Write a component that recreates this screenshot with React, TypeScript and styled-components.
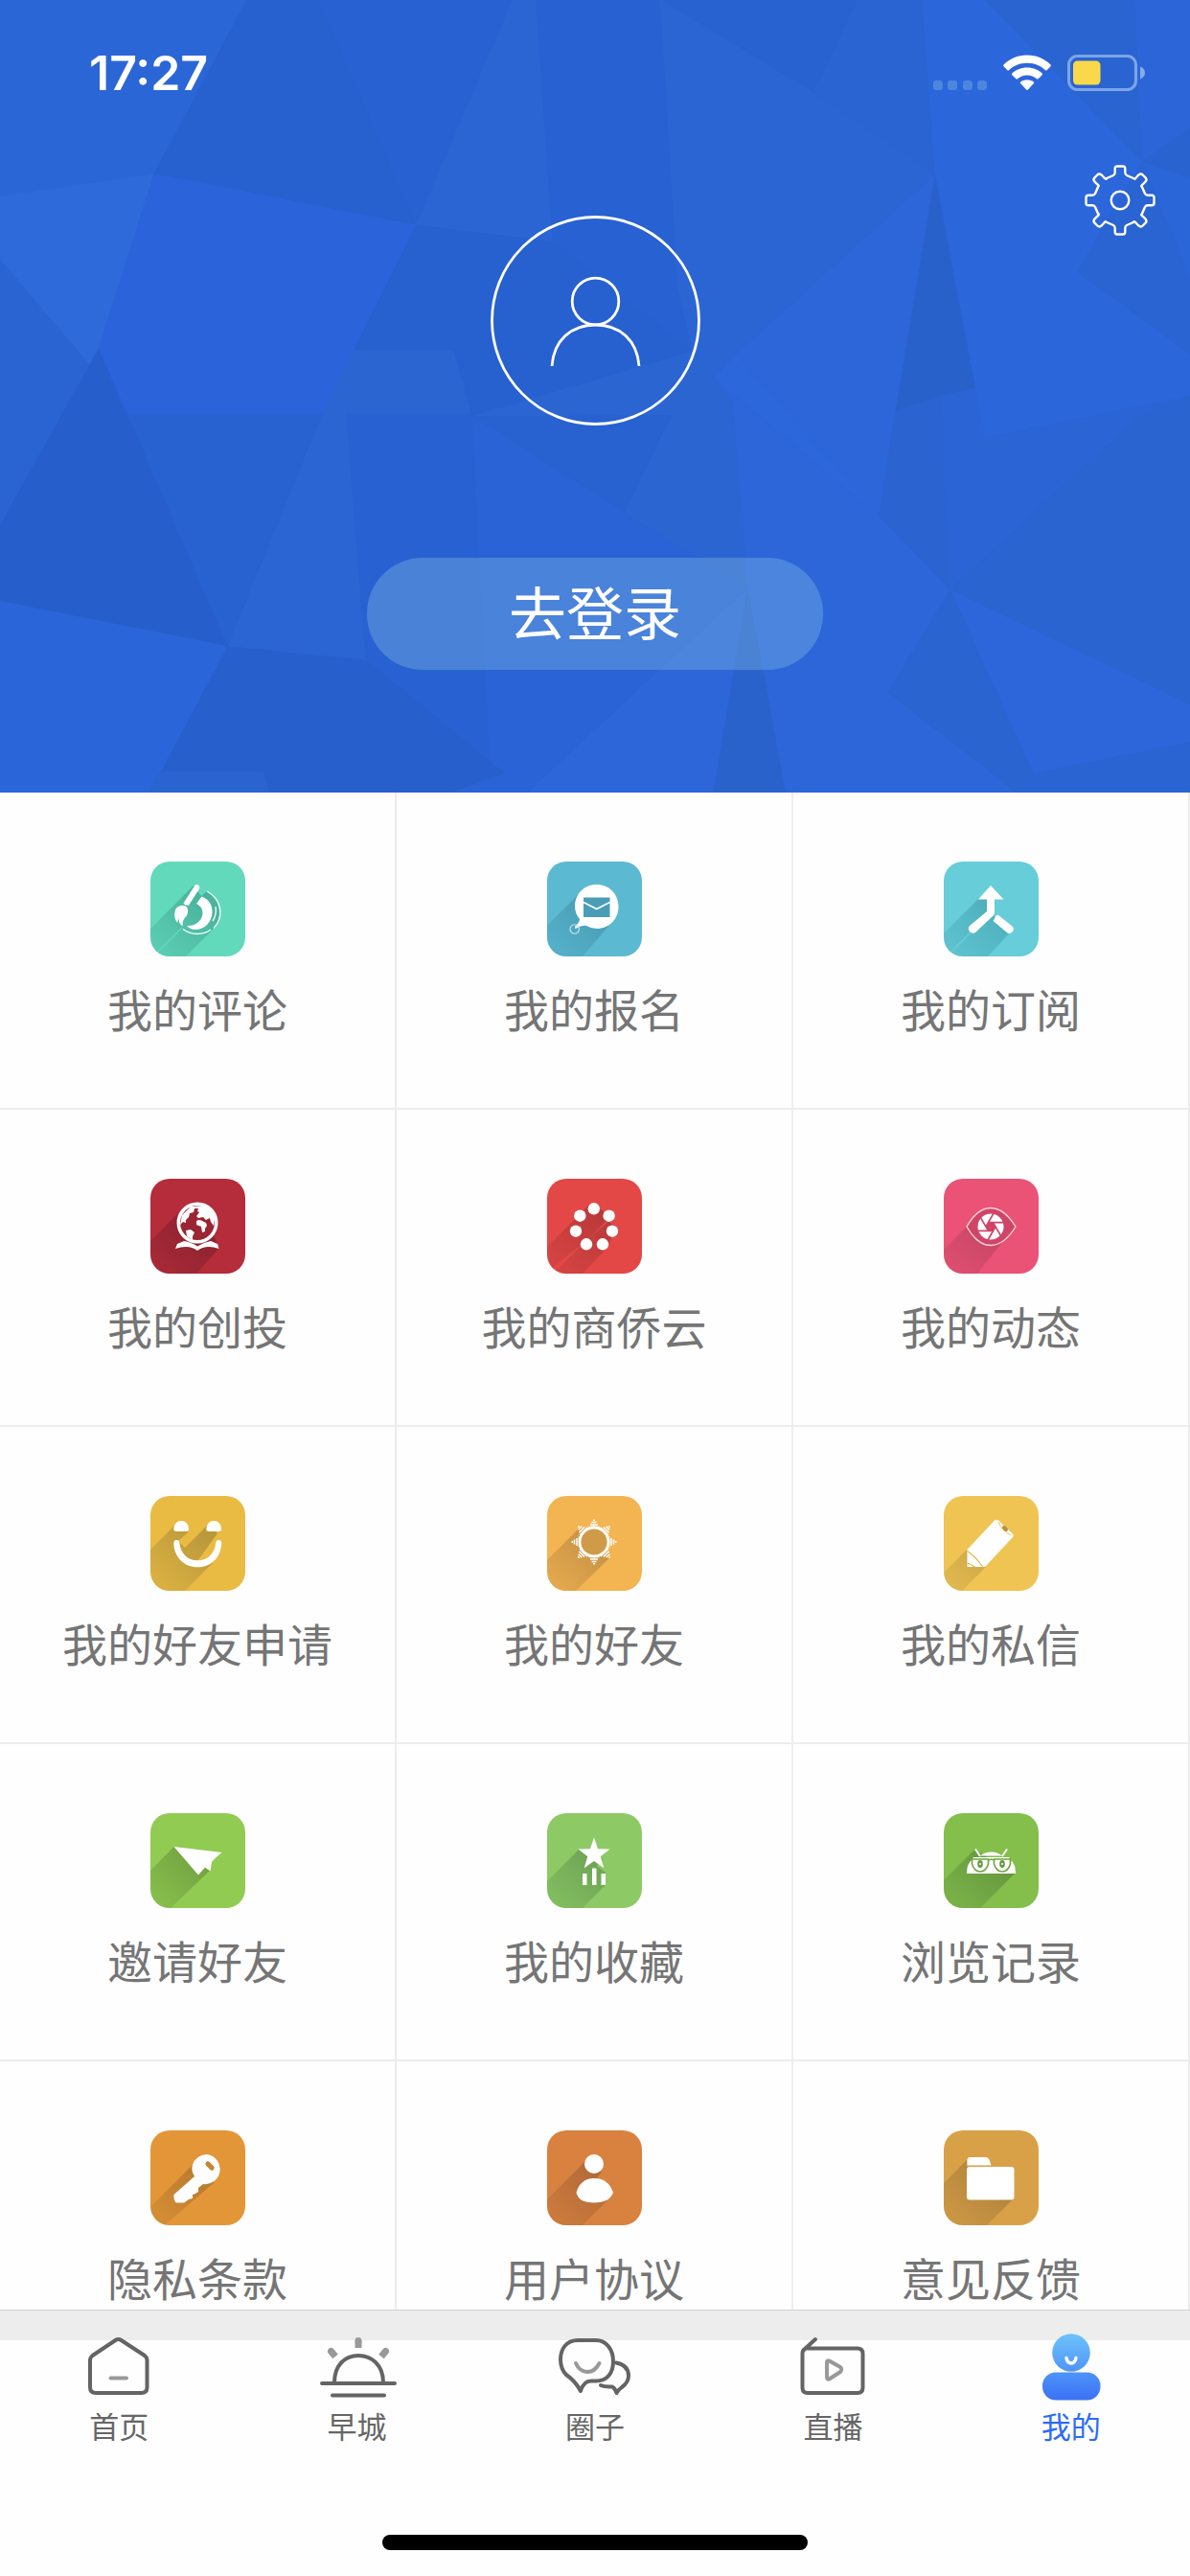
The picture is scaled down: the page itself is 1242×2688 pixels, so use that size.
import React from 'react';
import styled, { createGlobalStyle } from 'styled-components';

const GlobalStyle = createGlobalStyle`
  *, *::before, *::after { box-sizing: border-box; }
  html, body { margin: 0; padding: 0; background: #fefefe; }
  body {
    font-family: 'Noto Sans CJK SC', 'Noto Sans', sans-serif;
    font-weight: 400;
    color: #757575;
  }
  button { font: inherit; color: inherit; border: 0; padding: 0; background: none; cursor: pointer; }
`;

const Screen = styled.div`
  display: flex;
  flex-direction: column;
  height: 100vh;
  overflow: hidden;
`;

const Content = styled.main`
  flex: 1;
  min-height: 0;
  overflow-y: auto;
  scrollbar-width: none;
`;

/* ---------- header ---------- */

const Header = styled.header`
  position: relative;
  isolation: isolate;
  display: flex;
  flex-direction: column;
  align-items: center;
  padding-bottom: 128px;
  background: #2b64d4;
  color: #fff;
`;

const Facets = styled.svg`
  position: absolute;
  inset: 0;
  z-index: -1;
  width: 100%;
  height: 100%;
`;

const StatusBar = styled.div`
  align-self: stretch;
  display: flex;
  align-items: center;
  justify-content: space-between;
  height: 152px;
  padding: 0 47px 0 93px;
`;

const Clock = styled.time`
  font-family: Inter, 'Liberation Sans', sans-serif;
  font-size: 50px;
  font-weight: 600;
  line-height: 60px;
`;

const Indicators = styled.div`
  display: flex;
  align-items: center;
  gap: 17px;
`;

const Profile = styled.div`
  align-self: stretch;
  display: grid;
  grid-template-columns: 1fr auto 1fr;
  margin-top: 20px;
  padding: 0 36px;
`;

const Avatar = styled.button`
  grid-column: 2;
  display: grid;
  margin-top: 53px;
  border-radius: 50%;
`;

const SettingsButton = styled.button`
  grid-column: 3;
  display: grid;
  justify-self: end;
  align-self: start;
`;

const LoginButton = styled.button`
  display: flex;
  align-items: center;
  justify-content: center;
  width: 476px;
  height: 117px;
  margin-top: 138px;
  padding-bottom: 8px;
  border-radius: 58px;
  background: rgba(134, 188, 226, 0.36);
  font-size: 60px;
  line-height: 72px;
  color: #fff;
`;

const facets: [string, string][] = [
  ['0,0 325,0 203,338 0,382', '#2b66d7'],
  ['325,0 420,0 548,438 203,338', '#2760cf'],
  ['420,0 675,0 548,438', '#2861d2'],
  ['675,0 706,0 728,470 548,438', '#2b65d4'],
  ['706,0 870,0 893,560 912,684 728,470', '#2861d1'],
  ['0,382 203,338 130,678 118,710 0,505', '#2e6ad9'],
  ['0,505 118,710 0,1022', '#2a64d2'],
  ['203,338 548,438 466,682 425,805 165,805 130,678', '#2b64da'],
  ['548,438 598,682 466,682', '#2760cf'],
  ['466,682 598,682 622,805 425,805', '#2b65d1'],
  ['548,438 728,470 912,684 622,810 598,682', '#2760cf'],
  ['870,0 1072,180 1232,340 970,690 940,735 912,684 893,560', '#2b65d4'],
  ['872,0 1130,0 1072,180', '#2862d1'],
  ['1130,0 1215,0 1232,340 1072,180', '#2a64d3'],
  ['1215,0 1298,0 1505,315 1450,450 1420,530 1568,690 1568,770 1297,852 1232,340', '#2c66db'],
  ['1298,0 1495,0 1505,315', '#2a64d1'],
  ['1495,0 1568,0 1568,250 1505,315', '#2b65d8'],
  ['1505,315 1568,250 1568,345', '#2963d0'],
  ['1505,315 1568,345 1568,540', '#2b66d8'],
  ['1505,315 1568,540 1568,690 1420,530 1450,450', '#2a63d2'],
  ['940,735 970,690 1232,340 1180,800 1158,1005', '#2c66d8'],
  ['970,690 1158,1005 940,735', '#2d67dc'],
  ['1232,340 1285,755 1180,800', '#2961cb'],
  ['1180,800 1240,770 1250,1148 1158,1005', '#2b64d0'],
  ['1285,755 1297,852 1500,810 1252,1148 1240,770', '#2b65d5'],
  ['1500,810 1568,770 1568,1372 1252,1148', '#2a64d0'],
  ['118,710 130,678 175,830 300,1258 0,1170 0,1022', '#265fcc'],
  ['130,678 165,805 425,805 300,1258 175,830', '#2861d0'],
  ['425,805 456,805 482,1285 300,1258', '#2b65d3'],
  ['456,805 622,805 635,1100 645,1480 482,1285', '#2861d1'],
  ['622,810 823,998 985,1145 695,1543 665,1505 645,1480', '#2a63d5'],
  ['622,810 885,808 823,998', '#2861d0'],
  ['622,810 912,684 940,735 885,808', '#2b65d2'],
  ['885,808 940,735 965,780 985,1145 823,998', '#2b65d1'],
  ['940,735 1158,1005 1252,1148 1170,1348 985,1145 965,780', '#2c66d9'],
  ['985,1145 1035,1543 1340,1543 1170,1348', '#2c66d9'],
  ['985,1145 695,1543 940,1543', '#2c66d8'],
  ['985,1145 940,1543 1035,1543', '#2962cb'],
  ['0,1170 300,1258 212,1502 195,1543 0,1543', '#2b65da'],
  ['300,1258 350,1502 212,1502', '#2760cd'],
  ['212,1502 350,1502 355,1543 195,1543', '#2a64d1'],
  ['300,1258 482,1285 665,1505 595,1543 355,1543', '#2760cc'],
  ['665,1505 695,1543 595,1543', '#2a63d5'],
  ['1252,1148 1362,1505 1340,1543 1170,1348', '#2a64d0'],
  ['1252,1148 1568,1372 1568,1445 1362,1505', '#2c66da'],
  ['1362,1505 1568,1445 1568,1543 1340,1543', '#2a64d2'],
];

const HeaderFacets = () => (
  <Facets viewBox="0 0 1568 1543" preserveAspectRatio="none" aria-hidden="true">
    {facets.map(([points, fill]) => (
      <polygon key={points} points={points} fill={fill} />
    ))}
  </Facets>
);

const SignalIcon = () => (
  <svg width="56" height="38" viewBox="0 0 56 38" aria-hidden="true">
    {[0, 15, 31, 46].map((x) => (
      <rect key={x} x={x} y="27" width="10" height="10" rx="3" fill="#4d86df" />
    ))}
  </svg>
);

const WifiIcon = () => (
  <svg width="50" height="38" viewBox="0 0 50 38" fill="#fff" aria-hidden="true">
    <path d="M25 0.5C35 .5 43.500 4.500 49.500 10.500Q50.300 11.400 49.500 12.200L45.600 16.200Q44.800 16.900 44 16.200C39 11.500 32.500 8.800 25 8.800S11 11.500 6 16.200Q5.200 16.900 4.400 16.200L.5 12.200Q-.3 11.400.5 10.500C6.500 4.500 15 .5 25 .5Z" />
    <path d="M25 13.500C31.500 13.500 36.800 15.900 40.700 19.500Q41.500 20.300 40.700 21.200L36.600 25.300Q35.800 26 35 25.300C32.300 22.900 29 21.500 25 21.500S17.700 22.900 15 25.300Q14.200 26 13.400 25.300L9.300 21.200Q8.500 20.300 9.300 19.500C13.200 15.900 18.500 13.500 25 13.500Z" />
    <path d="M25 26.300C28 26.300 30.200 27.200 31.900 28.600Q32.600 29.300 31.900 30.100L25.900 36.500Q25 37.300 24.100 36.500L18.100 30.100Q17.400 29.300 18.100 28.600C19.800 27.200 22 26.300 25 26.300Z" />
  </svg>
);

const BatteryIcon = () => (
  <svg width="81" height="38" viewBox="0 0 81 38" aria-hidden="true">
    <rect x="1.500" y="1.500" width="70" height="35" rx="9" fill="none" stroke="#7ba5e8" strokeWidth="3.200" />
    <path d="M76 12.500C79 13.500 81 16 81 19S79 24.500 76 25.500Z" fill="#84ace9" />
    <rect x="6" y="6.500" width="28.500" height="25" rx="4.500" fill="#f9d84a" />
  </svg>
);

/* A point of the gear outline, turned by an angle about the gear's centre. */
const turned = (angle: number) => (x: number, y: number) => {
  const t = (angle * Math.PI) / 180;
  const px = 37 + x * Math.cos(t) - y * Math.sin(t);
  const py = 37 + x * Math.sin(t) + y * Math.cos(t);
  return `${px.toFixed(2)} ${py.toFixed(2)}`;
};

const straightTooth = (angle: number) => {
  const p = turned(angle);
  return `${angle === 0 ? 'M' : 'L'}${p(-15, -22.5)}L${p(-7, -26)}Q${p(-5.3, -27)} ${p(-5.3, -29)}L${p(-5.3, -33)}Q${p(-5.3, -35.5)} ${p(-3, -35.5)}L${p(3, -35.5)}Q${p(5.3, -35.5)} ${p(5.3, -33)}L${p(5.3, -29)}Q${p(5.3, -27)} ${p(7, -26)}L${p(15, -22.5)}`;
};

const diagonalTooth = (angle: number) => {
  const p = turned(angle);
  return `Q${p(-4.5, -25.5)} ${p(-5, -30)}L${p(-5, -33)}Q${p(-4.5, -35.5)} ${p(-2, -35.5)}L${p(2, -35.5)}Q${p(4.5, -35.5)} ${p(5, -33)}L${p(5, -30)}Q${p(4.5, -25.5)} ${p(6, -26)}`;
};

const GearIcon = () => (
  <svg width="74" height="74" viewBox="0 0 74 74" fill="none" stroke="#fff" strokeWidth="2.400" strokeLinejoin="round" aria-hidden="true">
    <path d={[0, 90, 180, 270].map((a) => straightTooth(a) + diagonalTooth(a + 45)).join('') + 'Z'} />
    <circle cx="37" cy="37" r="9.300" />
  </svg>
);

const AvatarIcon = () => (
  <svg width="219" height="219" viewBox="0 0 219 219" fill="none" stroke="#fff" strokeWidth="2.800" aria-hidden="true">
    <circle cx="109.500" cy="109.500" r="108" />
    <circle cx="109.500" cy="89.500" r="24.300" />
    <path d="M64 157C66 130 84 114 109.500 114S153 130 155 157" />
  </svg>
);

/* ---------- service grid ---------- */

const Grid = styled.nav`
  display: grid;
  grid-template-columns: repeat(3, 1fr);
  background: #fefefe;
`;

const Cell = styled.button`
  display: flex;
  flex-direction: column;
  align-items: center;
  gap: 26px;
  height: 331px;
  padding-top: 72px;
  border-right: 2px solid #ededed;
  border-bottom: 2px solid #ededed;
`;

const CellLabel = styled.span`
  font-size: 47px;
  line-height: 56px;
  white-space: nowrap;
`;

const Tile = styled.svg`
  display: block;
  width: 99px;
  height: 99px;
  border-radius: 20px;
  background: ${(p: { $color: string }) => p.$color};
`;

type Service = { id: string; label: string; color: string; shade: string; shadow: string; glyph: React.ReactNode };

const star = (cx: number, cy: number, outer: number, inner: number) =>
  Array.from({ length: 10 }, (_, i) => {
    const r = i % 2 ? inner : outer;
    const t = (i * Math.PI) / 5 - Math.PI / 2;
    return `${(cx + r * Math.cos(t)).toFixed(1)},${(cy + r * Math.sin(t)).toFixed(1)}`;
  }).join(' ');

const services: Service[] = [
  {
    id: 'comment', label: '我的评论', color: '#63d9bc', shade: '#3b9e8b',
    shadow: 'M45 25L0 70V99H37L67 69A26 26 0 0 0 59 31L53 36Z',
    glyph: (
      <>
        <path d="M8 94L33 69" stroke="#63d9bc" strokeWidth="1.500" />
        <path d="M46 25.500Q48 23 50.500 25Q52 26.500 51 28.500L40 45.500Q36 46.500 34.500 43.500Z" />
        <path d="M28 47.500Q34 44 38 47.500Q40.500 52 37.500 57Q33 61 33.500 67.500Q29 64 29.500 59L28 64Q24 58 25.500 52.500Q26 49.500 28 47.500Z" />
        <path d="M53.500 36.500C61 39 65 46 64.500 53C64 63 57 71 47 71Q41.500 71 38 67C47 68 55 61 54.500 53Q54 47 48 44Z" />
        <path d="M59 31C75 40 77 58 66 69.500M34 70.500C42 77 55 77 63 71M68 47Q69.500 55 65 62" fill="none" stroke="#eefcf8" strokeWidth="1.400" />
      </>
    ),
  },
  {
    id: 'signup', label: '我的报名', color: '#5cb9d2', shade: '#3a8ba3',
    shadow: 'M34 33L0 67V99H37L68 63Z',
    glyph: (
      <>
        <path d="M51.700 24C65 24 74.500 34 74.500 47S65 70 51.700 70Q46 70 41 67Q37 66 30 70Q28.500 70 29 68Q34 63 34 60Q29 54 29 47C29 34 38.500 24 51.700 24Z" />
        <rect x="38" y="37.500" width="27.500" height="20.500" fill="#4a9db6" />
        <path d="M38 42.500L51.700 49.500L65.500 42.500" fill="none" stroke="#fff" strokeWidth="1.600" />
        <circle cx="28.700" cy="70.500" r="4.700" fill="none" stroke="#c9e8f1" strokeWidth="1.100" />
      </>
    ),
  },
  {
    id: 'subscribe', label: '我的订阅', color: '#66cdd9', shade: '#3e9ba7',
    shadow: 'M36 39L0 75V91L6 95L29 72L50 55L71 72L46 99H4L29 74L46 52V39Z',
    glyph: (
      <>
        <path d="M49 25L62.500 39.500H53V53Q53 56 50 58L33 74Q29.500 76 27 73Q24.500 70 27 67L45 52V39.500H36Z" />
        <path d="M56.500 55.500L71.500 67.500Q74 70 72 73Q69.500 76 66.500 74.500L51.500 62Q53 60 54 57Z" />
      </>
    ),
  },
  {
    id: 'venture', label: '我的创投', color: '#b52c3a', shade: '#721c2b',
    shadow: 'M33 32L0 65V99H48L72 72L66 60Z',
    glyph: (
      <>
        <circle cx="49" cy="46" r="19.700" fill="#9b2533" stroke="#fff" strokeWidth="3.600" />
        <path d="M33 38L42 29L55 28Q55 31 50 31L46 31L45 35L41 36L40 40L37 43L37 46L34 45L31 48Z" />
        <path d="M55 28Q65 32 67 42L66 49L63 45L62 41L58 43L55 40L50 41L48 39L51 35L49 34L50 31Z" />
        <path d="M48 44Q51 42 54 44L58 46L59 49L57 52L57 55L54 56L53 50L48 48Z" />
        <path d="M37 54L42 53L46 56L44 60L44 64L38 60Z" />
        <path d="M26 73L28 68L35 65Q43 66 49 70.500Q56 66 63 65L70 68L71.500 73Q58 68 49 75Q40 68 26 73Z" />
      </>
    ),
  },
  {
    id: 'cloud', label: '我的商侨云', color: '#e34847', shade: '#a23232',
    shadow: 'M44 27L0 71V91L5 94L64 45L73 50L62 73L37 99H6L64 42L60 34Z',
    glyph: (
      <>
        {[[48.8, 31.3], [34.3, 38.7], [64.6, 38.7], [30, 54.7], [68, 54.7], [41, 68.3], [58, 68.3]].map(([x, y]) => (
          <circle key={`${x}-${y}`} cx={x} cy={y} r="6.200" />
        ))}
      </>
    ),
  },
  {
    id: 'moments', label: '我的动态', color: '#ea5276', shade: '#aa3d59',
    shadow: 'M24 50L0 74V99H35L66 60L49 30Z',
    glyph: (
      <>
        <path d="M24 50Q35 30.500 49 30.500T75 50Q63 69.500 49 69.500T24 50Z" fill="#cf4568" stroke="#f9d3dd" strokeWidth="1.400" />
        <circle cx="49" cy="50" r="13.500" />
        <polygon points="54,50 51.5,54.3 46.5,54.3 44,50 46.5,45.7 51.5,45.7" fill="#cf4568" />
        {[0, 60, 120, 180, 240, 300].map((a) => (
          <path key={a} d="M54 50L46 64" stroke="#cf4568" strokeWidth="1.700" transform={`rotate(${a} 49 50)`} />
        ))}
      </>
    ),
  },
  {
    id: 'requests', label: '我的好友申请', color: '#e9bb43', shade: '#9f8638',
    shadow: 'M26 30L0 56V99H36L65 70L49 68L70 39L60 30L36 54L29 47L40 37Z',
    glyph: (
      <>
        <path d="M24.300 34.500Q25 26 32.200 26T40 34.500Q40 37 37.500 37H27Q24.300 37 24.300 34.500Z" />
        <path d="M58.300 34.500Q59 26 66.200 26T74 34.500Q74 37 71.500 37H61Q58.300 37 58.300 34.500Z" />
        <path d="M24.300 49Q24.300 46 27.300 46T30.300 49C31.500 60 38.500 67.300 49.300 67.300S67 60 68.200 49Q68.200 46 71.200 46T74.200 49C74 64 63.500 74.300 49.300 74.300S24.500 64 24.300 49Z" />
      </>
    ),
  },
  {
    id: 'friends', label: '我的好友', color: '#f3b452', shade: '#a87b3d',
    shadow: 'M34 33L0 67V99H30L66 64L50 34Z',
    glyph: (
      <>
        {[0, 45, 90, 135, 180, 225, 270, 315].map((a) => (
          <path
            key={a}
            d="M43.500 32.500H54.500M45 30H53M46.500 27.500H51.500M48 25.300H50"
            stroke="#fff"
            strokeWidth="1.500"
            transform={`rotate(${a} 49 48)`}
          />
        ))}
        <circle cx="49" cy="48" r="15" fill="#cf9b49" stroke="#fff" strokeWidth="2.800" />
      </>
    ),
  },
  {
    id: 'messages', label: '我的私信', color: '#f0c453', shade: '#a88a3b',
    shadow: 'M24 56L0 80V99H19L44 74Z',
    glyph: (
      <>
        <path d="M53 25.500Q55 24 57 25.500L71.500 39Q73.500 41 72 43L43 74H24.500V56Z" />
        <path d="M24.500 57.500Q33 63 41 74.500M24.500 70Q29 71 32.500 74.500" fill="none" stroke="#e0b34c" strokeWidth="1.200" />
        <path d="M57 27Q60 36 70.500 41" fill="none" stroke="#f0c453" strokeWidth="1" />
        <ellipse cx="64" cy="34" rx="3.500" ry="2" transform="rotate(45 64 34)" fill="#b28f42" />
      </>
    ),
  },
  {
    id: 'invite', label: '邀请好友', color: '#92cb51', shade: '#5b8737',
    shadow: 'M24.500 35L0 60V99H21L62 60Z',
    glyph: <path d="M24.500 35L74.700 41Q67 47 64 51L62.500 60.500L57 56.500L50 64.500Z" />,
  },
  {
    id: 'favorites', label: '我的收藏', color: '#8dca66', shade: '#588949',
    shadow: 'M33 38L0 71V99H37L61 75V62L52 55L58 48Z',
    glyph: (
      <>
        <polygon points={star(49, 43, 17.5, 7)} />
        <rect x="37" y="63" width="4.500" height="12" />
        <rect x="47" y="57.500" width="4.500" height="17.500" />
        <rect x="56.500" y="63" width="4.500" height="12" />
      </>
    ),
  },
  {
    id: 'history', label: '浏览记录', color: '#84bf4c', shade: '#527f37',
    shadow: 'M32 38L0 70V99H38L74 63Z',
    glyph: (
      <>
        <path d="M24 63Q24 53 29 49L31 46H68L70 49Q75 53 75 63Z" />
        <path d="M38 44.500Q43 40.500 49.500 40.500T61 44.500Z" />
        <path d="M33 37.500L38 45M66 37.500L61 45" stroke="#fff" strokeWidth="2" />
        {[38, 61].map((x) => (
          <g key={x}>
            <path d={`M${x - 8.500} 48H${x + 8.500}V53Q${x + 6} 61 ${x} 61T${x - 8.500} 53Z`} stroke="#6ea343" strokeWidth="1.600" strokeLinejoin="round" />
            <ellipse cx={x} cy="53" rx="2.800" ry="4" fill="#69993f" />
            <circle cx={x} cy="53" r="1" />
          </g>
        ))}
        <path d="M46 49.500Q49.500 47 53 49.500" fill="none" stroke="#6ea343" strokeWidth="1.600" />
      </>
    ),
  },
  {
    id: 'privacy', label: '隐私条款', color: '#e39637', shade: '#9c6a2c',
    shadow: 'M45 35L0 80V99H15L67 54Z',
    glyph: (
      <>
        <path d="M59 25A15.500 15.500 0 1 1 55 56L50 60L50 64L47 66L44 67L44 71L40 72L35 75.500H27Q24 73 24.500 67L46 48Q42 42 44 36Q47 26 59 25Z" />
        <rect x="56.500" y="34.500" width="11" height="5" rx="2.500" fill="#c68434" transform="rotate(45 62 37)" />
      </>
    ),
  },
  {
    id: 'terms', label: '用户协议', color: '#d98240', shade: '#995c32',
    shadow: 'M40 32L0 72V99H37L68 68L52 50L57 43Z',
    glyph: (
      <>
        <circle cx="49" cy="35" r="10" />
        <path d="M49 50C60 50 66 56 69 65Q65 75.500 49 75.500T30.500 65C33 56 39 50 49 50Z" />
      </>
    ),
  },
  {
    id: 'feedback', label: '意见反馈', color: '#d9a147', shade: '#957037',
    shadow: 'M26 29L0 55V99H45L73 71Z',
    glyph: (
      <>
        <path d="M24 38V31Q24 28 27 28H44Q46.500 28 47.500 30.500L49 36H75V38Z" fill="#d9a147" />
        <path d="M24.500 36.500V31Q24.500 28 27.500 28H44Q46.500 28 47.500 30.500L49.500 36.500Z" />
        <rect x="24" y="38" width="49.500" height="34.500" rx="3" />
      </>
    ),
  },
];

const ServiceTile = ({ service }: { service: Service }) => (
  <Tile $color={service.color} viewBox="0 0 99 99" fill="#fff" aria-hidden="true">
    <defs>
      <linearGradient id={`shade-${service.id}`} gradientUnits="userSpaceOnUse" x1="60" y1="40" x2="12" y2="92">
        <stop offset="0" stopColor={service.shade} stopOpacity="0.65" />
        <stop offset="1" stopColor={service.shade} stopOpacity="0.22" />
      </linearGradient>
    </defs>
    <path d={service.shadow} fill={`url(#shade-${service.id})`} />
    {service.glyph}
  </Tile>
);

/* ---------- tab bar ---------- */

const TabBar = styled.footer`
  display: flex;
  flex-direction: column;
  align-items: center;
  height: 278px;
  padding-bottom: 27px;
  border-top: 1px solid #d2d2d2;
  background: linear-gradient(#ededed 31px, #fefefe 31px);
`;

const Tabs = styled.nav`
  align-self: stretch;
  display: flex;
  margin-bottom: auto;
  padding-top: 23px;
`;

const Tab = styled.button<{ $active?: boolean }>`
  flex: 1;
  display: flex;
  flex-direction: column;
  align-items: center;
  gap: 7px;
  font-size: 31px;
  line-height: 36px;
  color: ${(p) => (p.$active ? '#2b6cf6' : '#666')};
`;

const TabGlyph = styled.svg`
  width: 84px;
  height: 72px;
  fill: none;
  stroke: #646464;
  stroke-width: 4;
  stroke-linecap: round;
  stroke-linejoin: round;
`;

const HomeIndicator = styled.div`
  width: 444px;
  height: 16px;
  border-radius: 8px;
  background: #000;
`;

const tabs: { label: string; active?: boolean; glyph: React.ReactNode }[] = [
  {
    label: '首页',
    glyph: (
      <>
        <path d="M38.500 8Q41.500 6 44.500 8L69 24Q71.500 26 71.500 29V57Q71.500 63 65.500 63H18Q12 63 12 57V29Q12 26 14.500 24Z" />
        <path d="M33.500 47.500H50" stroke="#999" />
      </>
    ),
  },
  {
    label: '早城',
    glyph: (
      <>
        <path d="M5 53H81M16 65.500H70M18 52C18 34 29 24 43 24S69 34 69 52" />
        <path d="M43 9V16M15 20L19 25M71 20L67 25" stroke="#999" strokeWidth="7" strokeLinecap="butt" />
        <path d="M43 8.500V9M14.500 19.500L15 20M71.500 19.500L71 20" stroke="#999" strokeWidth="7" />
      </>
    ),
  },
  {
    label: '圈子',
    glyph: (
      <>
        <path d="M24 8H43C54 8 61 18 61 30C61 42 55 50.500 43 50.500H38Q30 50.500 27 61Q22 51 12 44Q6 38 6 28C6 16 13 8 24 8Z" />
        <path d="M64 31.500Q77 34 77 45Q77 52 70 57Q66 60 64.500 63Q63 58 60 56.500Q52 57 48 55" />
        <path d="M22 32Q26 41 34 41T46.500 32" stroke="#999" />
      </>
    ),
  },
  {
    label: '直播',
    glyph: (
      <>
        <path d="M24 7L13 17M16 16.500H68Q73.500 16.500 73.500 22V57.500Q73.500 63 68 63H16Q10.500 63 10.500 57.500V22Q10.500 18 13.500 17" />
        <path d="M36 31Q36 28.500 38.500 29.500L50 36Q52.500 38 50 41L38.500 48.500Q36 49.500 36 46Z" stroke="#999" />
      </>
    ),
  },
  {
    label: '我的',
    active: true,
    glyph: (
      <>
        <defs>
          <linearGradient id="tab-me" gradientUnits="userSpaceOnUse" x1="42" y1="2" x2="42" y2="71">
            <stop offset="0" stopColor="#6cc2fb" />
            <stop offset="1" stopColor="#3a70f6" />
          </linearGradient>
        </defs>
        <circle cx="42" cy="21" r="19.800" fill="url(#tab-me)" stroke="none" />
        <rect x="12" y="41.500" width="60.500" height="29" rx="14" fill="url(#tab-me)" stroke="none" />
        <path d="M37 26.500Q38 32 42 32T47 26.500" stroke="#fff" strokeWidth="3.400" />
      </>
    ),
  },
];

export default function App() {
  return (
    <>
      <GlobalStyle />
      <Screen>
        <Content>
          <Header>
            <HeaderFacets />
            <StatusBar>
              <Clock>17:27</Clock>
              <Indicators>
                <SignalIcon />
                <WifiIcon />
                <BatteryIcon />
              </Indicators>
            </StatusBar>
            <Profile>
              <Avatar type="button" aria-label="头像">
                <AvatarIcon />
              </Avatar>
              <SettingsButton type="button" aria-label="设置">
                <GearIcon />
              </SettingsButton>
            </Profile>
            <LoginButton type="button">去登录</LoginButton>
          </Header>
          <Grid>
            {services.map((service) => (
              <Cell key={service.id} type="button">
                <ServiceTile service={service} />
                <CellLabel>{service.label}</CellLabel>
              </Cell>
            ))}
          </Grid>
        </Content>
        <TabBar>
          <Tabs>
            {tabs.map((tab) => (
              <Tab key={tab.label} type="button" $active={tab.active} aria-current={tab.active ? 'page' : undefined}>
                <TabGlyph viewBox="0 0 84 72" aria-hidden="true">
                  {tab.glyph}
                </TabGlyph>
                {tab.label}
              </Tab>
            ))}
          </Tabs>
          <HomeIndicator />
        </TabBar>
      </Screen>
    </>
  );
}
